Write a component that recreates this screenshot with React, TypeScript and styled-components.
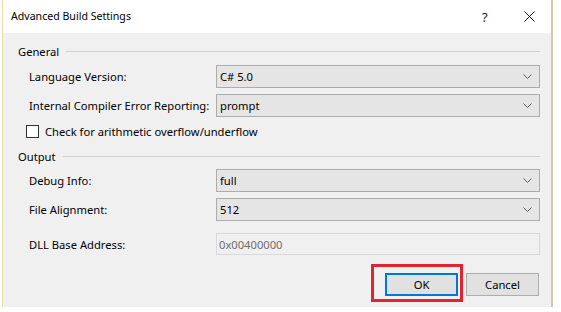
import React from 'react';
import styled, { createGlobalStyle } from 'styled-components';

const GlobalStyle = createGlobalStyle`
  html, body {
    margin: 0;
    padding: 0;
    background: #ffffff;
  }
  body {
    font-family: 'Noto Sans', 'Liberation Sans', sans-serif;
    font-size: 11.2px;
    color: #000000;
  }
`;

const Window = styled.div`
  width: 548px;
  height: 307px;
  margin-left: 2px;
  border-left: 1px solid #eadcab;
  border-right: 2px solid #d3c7a5;
  display: flex;
  flex-direction: column;
  box-sizing: content-box;
`;

const TitleBar = styled.div`
  height: 33px;
  background: #ffffff;
  display: flex;
  align-items: center;
  padding-left: 8px;
  padding-right: 16px;
`;

const Title = styled.div`
  flex: 1;
  font-size: 10.6px;
  margin-top: -1px;
  white-space: nowrap;
`;

const HelpGlyph = styled.span`
  font-size: 13px;
  width: 12px;
  margin-right: 30px;
  color: #1a1a1a;
`;

const Body = styled.div`
  flex: 1;
  background: #f0f0f0;
  padding: 10px 11px 0 15px;
  display: flex;
  flex-direction: column;
`;

const GroupHeader = styled.div<{ $top: number }>`
  display: flex;
  align-items: center;
  height: 16px;
  margin-top: ${(p) => p.$top}px;
  gap: 7px;
  white-space: nowrap;

  &::after {
    content: '';
    flex: 1;
    height: 1px;
    background: #d0d0d0;
  }
`;

const Row = styled.div<{ $top: number }>`
  display: flex;
  align-items: center;
  margin-top: ${(p) => p.$top}px;
  padding-left: 11px;
`;

const Label = styled.div`
  width: 187px;
  flex-shrink: 0;
  white-space: nowrap;
`;

const Combo = styled.div`
  flex: 1;
  height: 23px;
  box-sizing: border-box;
  border: 1px solid #acacac;
  background: #e5e5e5;
  display: flex;
  align-items: center;
  padding-left: 3px;
  padding-right: 7px;
`;

const ComboValue = styled.span`
  flex: 1;
`;

const TextBox = styled.div`
  flex: 1;
  height: 22px;
  box-sizing: border-box;
  border: 1px solid #d9d9d9;
  background: #f0f0f0;
  color: #6d6d6d;
  display: flex;
  align-items: center;
  padding-left: 2px;
`;

const CheckRow = styled.label<{ $top: number }>`
  display: flex;
  align-items: center;
  height: 16px;
  margin-top: ${(p) => p.$top}px;
  padding-left: 8px;
  gap: 6px;
  white-space: nowrap;
`;

const CheckBox = styled.span`
  width: 13px;
  height: 13px;
  box-sizing: border-box;
  border: 1px solid #333333;
  background: #ffffff;
`;

const ButtonBar = styled.div`
  display: flex;
  justify-content: flex-end;
  gap: 8px;
  margin-top: 18px;
  padding-right: 1px;
`;

const Highlight = styled.div`
  position: relative;

  &::before {
    content: '';
    position: absolute;
    left: -14px;
    right: -5px;
    top: -9px;
    bottom: -6px;
    border: 3px solid #e1252f;
    pointer-events: none;
  }
`;

const Button = styled.button<{ $default?: boolean }>`
  width: 73px;
  height: 23px;
  box-sizing: border-box;
  font-family: inherit;
  font-size: 11.2px;
  color: #000000;
  background: #e1e1e1;
  border: ${(p) => (p.$default ? '2px solid #0078d7' : '1px solid #adadad')};
  padding: 0;
  display: flex;
  align-items: center;
  justify-content: center;
`;

const Chevron = () => (
  <svg width="9" height="5" viewBox="0 0 9 5">
    <path d="M0.5 0.5 L4.5 4.5 L8.5 0.5" fill="none" stroke="#606060" strokeWidth="1" />
  </svg>
);

const CloseIcon = () => (
  <svg width="11" height="11" viewBox="0 0 11 11">
    <path d="M0.5 0.5 L10.5 10.5 M10.5 0.5 L0.5 10.5" stroke="#1a1a1a" strokeWidth="1" />
  </svg>
);

const ComboField = ({ value }: { value: string }) => (
  <Combo>
    <ComboValue>{value}</ComboValue>
    <Chevron />
  </Combo>
);

export default function App() {
  return (
    <>
      <GlobalStyle />
      <Window>
        <TitleBar>
          <Title>Advanced Build Settings</Title>
          <HelpGlyph>?</HelpGlyph>
          <CloseIcon />
        </TitleBar>
        <Body>
          <GroupHeader $top={0}>General</GroupHeader>
          <Row $top={6}>
            <Label>Language Version:</Label>
            <ComboField value="C# 5.0" />
          </Row>
          <Row $top={6}>
            <Label>Internal Compiler Error Reporting:</Label>
            <ComboField value="prompt" />
          </Row>
          <CheckRow $top={6}>
            <CheckBox />
            Check for arithmetic overflow/underflow
          </CheckRow>
          <GroupHeader $top={9}>Output</GroupHeader>
          <Row $top={5}>
            <Label>Debug Info:</Label>
            <ComboField value="full" />
          </Row>
          <Row $top={6}>
            <Label>File Alignment:</Label>
            <ComboField value="512" />
          </Row>
          <Row $top={12}>
            <Label>DLL Base Address:</Label>
            <TextBox>0x00400000</TextBox>
          </Row>
          <ButtonBar>
            <Highlight>
              <Button $default>OK</Button>
            </Highlight>
            <Button>Cancel</Button>
          </ButtonBar>
        </Body>
      </Window>
    </>
  );
}
